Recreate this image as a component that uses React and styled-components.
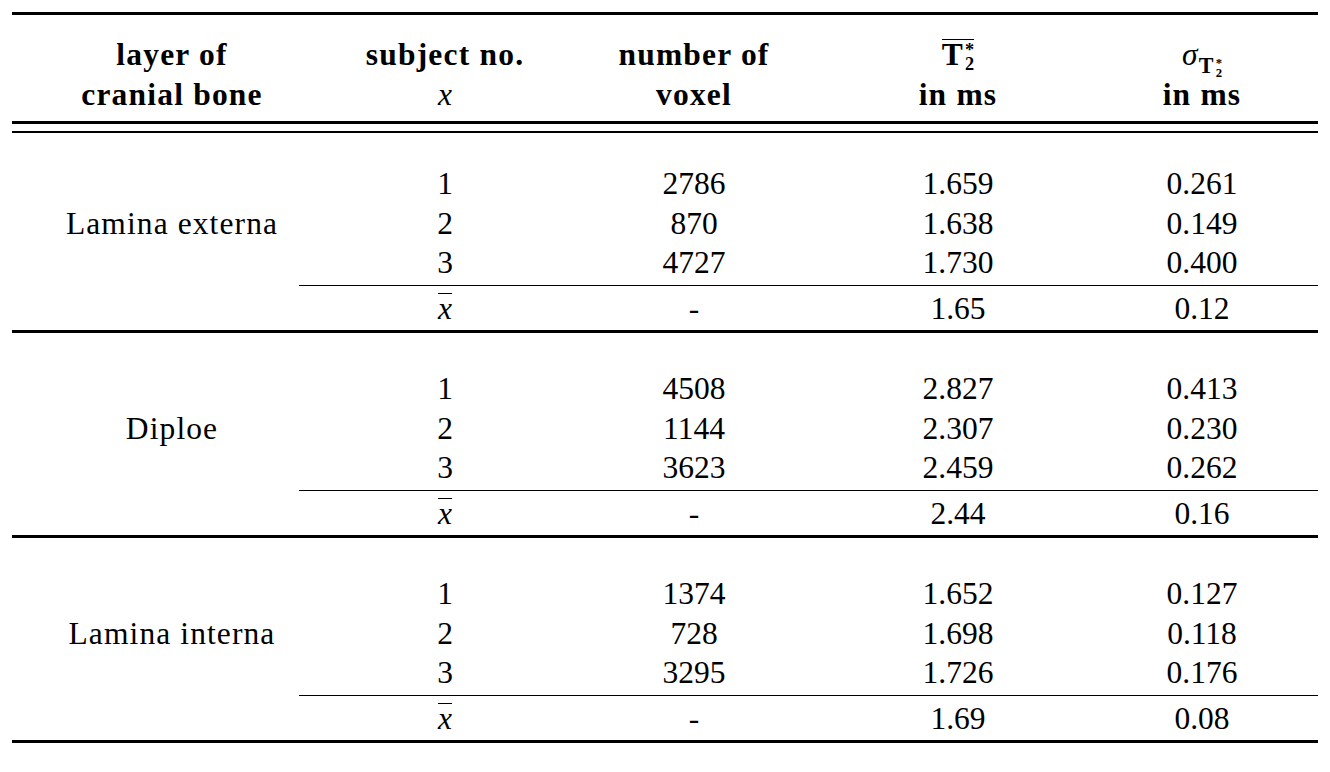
import React from "react";
import styled, { createGlobalStyle } from "styled-components";

const GlobalStyle = createGlobalStyle`
  body {
    margin: 0;
    background: #ffffff;
    color: #000000;
    font-family: "Liberation Serif", "Times New Roman", serif;
  }
`;

const groups = [
  {
    name: "Lamina externa",
    rows: [
      ["1", "2786", "1.659", "0.261"],
      ["2", "870", "1.638", "0.149"],
      ["3", "4727", "1.730", "0.400"],
    ],
    mean: ["1.65", "0.12"],
  },
  {
    name: "Diploe",
    rows: [
      ["1", "4508", "2.827", "0.413"],
      ["2", "1144", "2.307", "0.230"],
      ["3", "3623", "2.459", "0.262"],
    ],
    mean: ["2.44", "0.16"],
  },
  {
    name: "Lamina interna",
    rows: [
      ["1", "1374", "1.652", "0.127"],
      ["2", "728", "1.698", "0.118"],
      ["3", "3295", "1.726", "0.176"],
    ],
    mean: ["1.69", "0.08"],
  },
];

const Page = styled.div`
  padding: 12px;
`;

const Table = styled.table`
  width: 1306px;
  border-collapse: collapse;
  table-layout: fixed;
  font-size: 31.5px;
`;

const HeadCell = styled.th`
  border-top: 3px solid #000;
  padding: 20px 0 6px;
  font-weight: 700;
  letter-spacing: 1.2px;
  text-align: center;
  vertical-align: top;
`;

const HeadLine = styled.div`
  height: 40px;
  line-height: 40px;
  white-space: nowrap;
`;

const RuleCell = styled.td`
  padding: 0;
  height: 12px;
`;

const DoubleRule = styled.div`
  height: 7px;
  border-top: 3px solid #000;
  border-bottom: 2px solid #000;
`;

const Spacer = styled.tr`
  height: ${({ $first }) => ($first ? "31px" : "38px")};
`;

const Cell = styled.td`
  padding: 0;
  height: 39.5px;
  line-height: 39.5px;
  text-align: center;
  vertical-align: middle;
`;

const LabelCell = styled(Cell)`
  letter-spacing: 1.1px;
`;

const MeanCell = styled.td`
  padding: 6.5px 0 1px;
  line-height: 39.5px;
  text-align: center;
  border-bottom: 3px solid #000;
  background: ${({ $trim }) =>
    $trim
      ? "linear-gradient(#000, #000) right 2px / 33px 1px no-repeat"
      : "linear-gradient(#000, #000) left 2px / 100% 1px no-repeat"};
`;

const MathX = styled.i`
  font-style: italic;
  font-weight: 400;
  letter-spacing: 0;
`;

const Bar = styled.span`
  display: inline-block;
  border-top: 1.5px solid #000;
  line-height: 0.75;
  padding-top: 3px;
`;

const Scripts = styled.span`
  display: inline-block;
  font-size: 0.58em;
  line-height: 0.78;
  vertical-align: -0.3em;
  margin-left: 1px;
  letter-spacing: 0;
  text-align: left;

  span {
    display: block;
  }
`;

const Sigma = styled.i`
  font-weight: 400;
`;

const SubT = styled.span`
  font-size: 0.7em;
  vertical-align: -0.35em;
`;

const TStar = () => (
  <>
    T
    <Scripts>
      <span>*</span>
      <span>2</span>
    </Scripts>
  </>
);

export default function App() {
  return (
    <Page>
      <GlobalStyle />
      <Table>
        <colgroup>
          <col style={{ width: 320 }} />
          <col style={{ width: 226 }} />
          <col style={{ width: 272 }} />
          <col style={{ width: 256 }} />
          <col style={{ width: 232 }} />
        </colgroup>
        <thead>
          <tr>
            <HeadCell>
              <HeadLine>layer of</HeadLine>
              <HeadLine>cranial bone</HeadLine>
            </HeadCell>
            <HeadCell>
              <HeadLine>subject no.</HeadLine>
              <HeadLine>
                <MathX>x</MathX>
              </HeadLine>
            </HeadCell>
            <HeadCell>
              <HeadLine>number of</HeadLine>
              <HeadLine>voxel</HeadLine>
            </HeadCell>
            <HeadCell>
              <HeadLine>
                <Bar>
                  <TStar />
                </Bar>
              </HeadLine>
              <HeadLine>in ms</HeadLine>
            </HeadCell>
            <HeadCell>
              <HeadLine>
                <Sigma>σ</Sigma>
                <SubT>
                  <TStar />
                </SubT>
              </HeadLine>
              <HeadLine>in ms</HeadLine>
            </HeadCell>
          </tr>
          <tr>
            <RuleCell colSpan={5}>
              <DoubleRule />
            </RuleCell>
          </tr>
        </thead>
        {groups.map((g, gi) => (
          <tbody key={g.name}>
            <Spacer $first={gi === 0}>
              <td colSpan={5} />
            </Spacer>
            {g.rows.map((r, i) => (
              <tr key={i}>
                {i === 0 && <LabelCell rowSpan={3}>{g.name}</LabelCell>}
                {r.map((v, j) => (
                  <Cell key={j}>{v}</Cell>
                ))}
              </tr>
            ))}
            <tr>
              <MeanCell $trim />
              <MeanCell>
                <Bar>
                  <MathX>x</MathX>
                </Bar>
              </MeanCell>
              <MeanCell>-</MeanCell>
              <MeanCell>{g.mean[0]}</MeanCell>
              <MeanCell>{g.mean[1]}</MeanCell>
            </tr>
          </tbody>
        ))}
      </Table>
    </Page>
  );
}
